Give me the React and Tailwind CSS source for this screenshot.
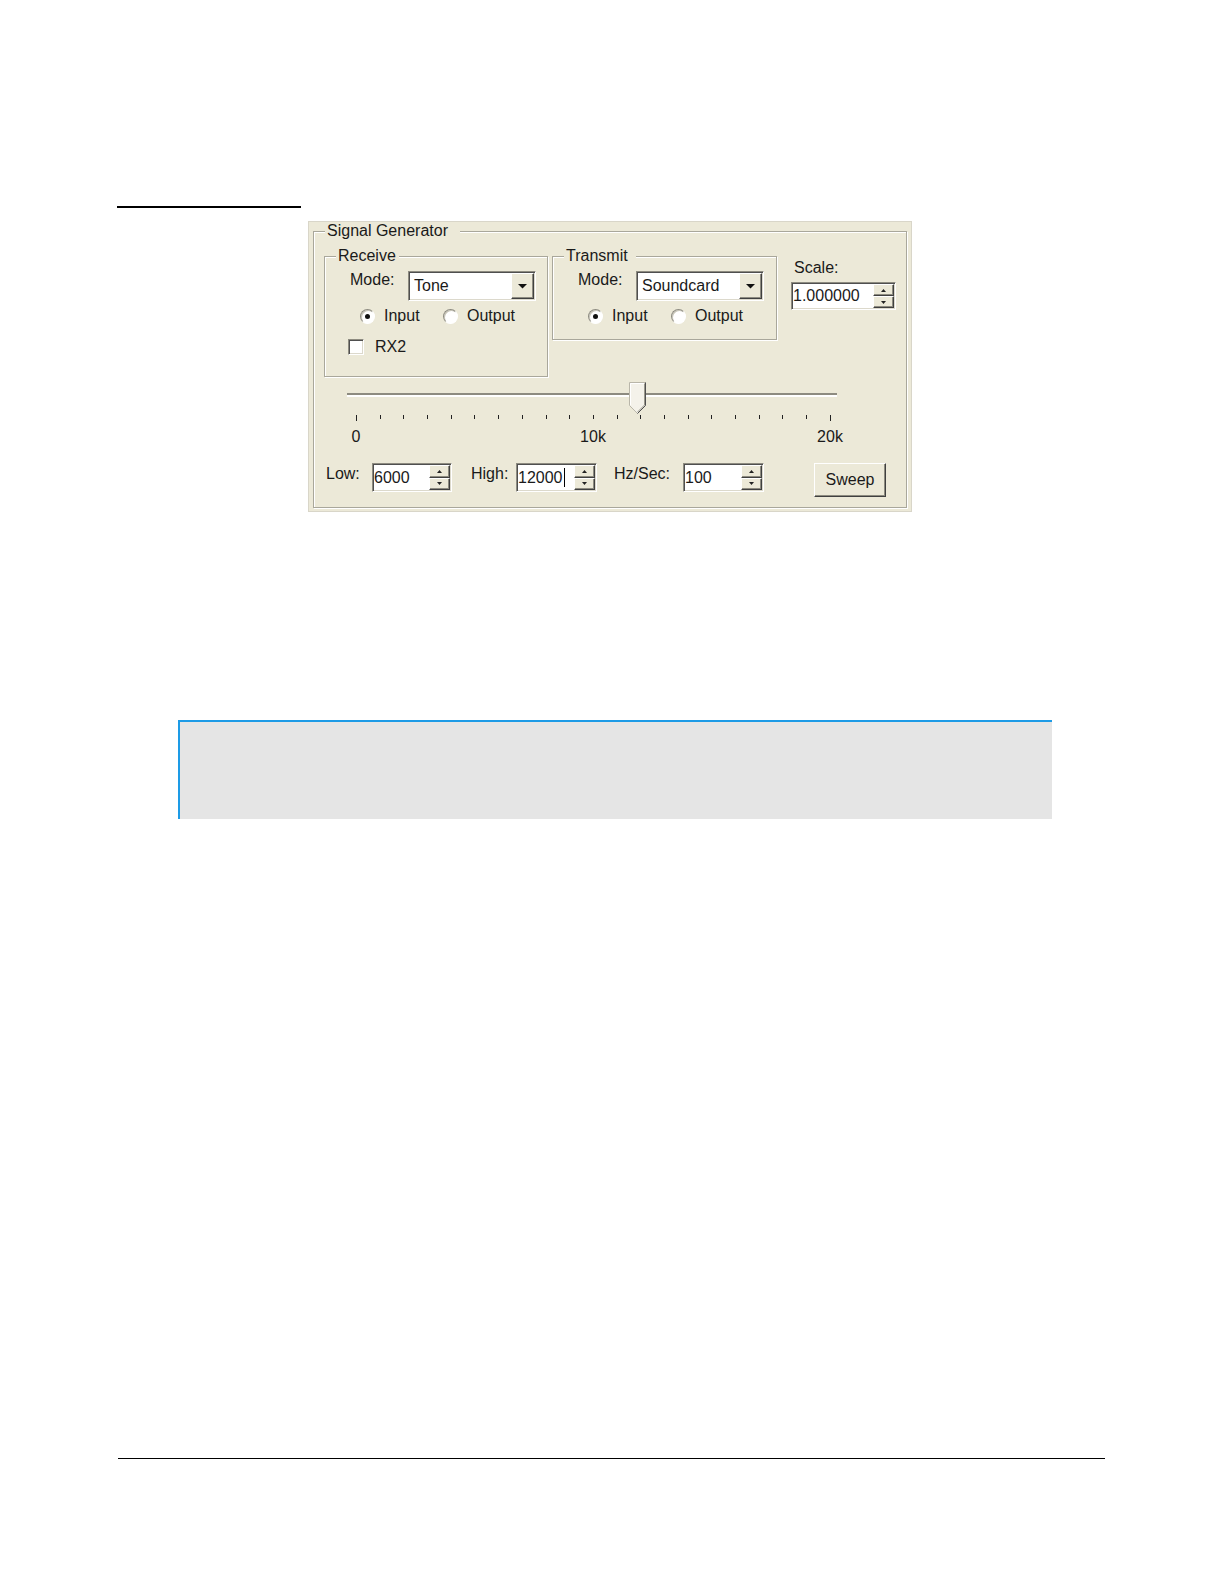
const sunken =
  'border border-t-[#8d8b80] border-l-[#8d8b80] border-b-white border-r-white shadow-[inset_1px_1px_0_#4f4f4f,inset_-1px_-1px_0_#dcd9cc]';
const raised =
  'border border-t-white border-l-white border-b-[#404040] border-r-[#404040] shadow-[inset_-1px_-1px_0_#8d8b80]';

function GroupBox({ title, className, legendPad = 'pr-[3px]', children }) {
  return (
    <div
      className={`relative border border-[#a9a79b] shadow-[inset_1px_1px_0_#fff,1px_1px_0_#fff] ${className}`}
    >
      <span className={`absolute left-[11px] top-[-10px] bg-[#ece9d8] pl-[2px] leading-[18px] ${legendPad}`}>
        {title}
      </span>
      {children}
    </div>
  );
}

function DownArrow() {
  return (
    <svg width="9" height="5" viewBox="0 0 9 5">
      <polygon points="0,0 9,0 4.5,4.5" fill="#111" />
    </svg>
  );
}

function ComboBox({ value }) {
  return (
    <div className={`flex w-[128px] h-[30px] bg-white p-[1px] ${sunken}`}>
      <span className="flex-1 pl-[4px] leading-[26px]">{value}</span>
      <span className={`flex w-[23px] items-center justify-center bg-[#ece9d8] ${raised}`}>
        <DownArrow />
      </span>
    </div>
  );
}

function SpinEdit({ value, width, height, caret }) {
  return (
    <div className={`flex bg-white p-[1px] ${sunken} ${width} ${height}`}>
      <span className="flex flex-1 items-center leading-[18px]">
        {value}
        {caret && <span className="ml-[1px] h-[19px] w-px bg-black" />}
      </span>
      <span className="flex w-[21px] flex-col">
        <span className={`flex flex-1 items-center justify-center bg-[#ece9d8] ${raised}`}>
          <svg width="5" height="3" viewBox="0 0 5 3">
            <polygon points="2.5,0 5,3 0,3" fill="#222" />
          </svg>
        </span>
        <span className={`flex flex-1 items-center justify-center bg-[#ece9d8] ${raised}`}>
          <svg width="5" height="3" viewBox="0 0 5 3">
            <polygon points="0,0 5,0 2.5,3" fill="#222" />
          </svg>
        </span>
      </span>
    </div>
  );
}

function Radio({ checked, label }) {
  return (
    <span className="flex items-center">
      <span className="flex h-[15px] w-[15px] items-center justify-center rounded-full border border-t-[#8d8b80] border-l-[#8d8b80] border-b-white border-r-white bg-white shadow-[inset_1px_1px_0_#c9c6b8]">
        {checked && <span className="h-[5px] w-[5px] rounded-full bg-[#111]" />}
      </span>
      <span className="ml-[9px] leading-[18px]">{label}</span>
    </span>
  );
}

function ModeRows({ mode }) {
  return (
    <>
      <div className="flex items-start mt-[14px] ml-[25px]">
        <span className="w-[58px] leading-[18px]">Mode:</span>
        <ComboBox value={mode} />
      </div>
      <div className="flex h-[18px] items-center mt-[6px] ml-[35px]">
        <span className="w-[83px]">
          <Radio checked label="Input" />
        </span>
        <Radio label="Output" />
      </div>
    </>
  );
}

function Thumb() {
  return (
    <svg width="17" height="32" viewBox="0 0 17 32" className="absolute left-[282px] top-0">
      <path d="M0.5 0.5 H16.5 V23.5 L8.5 31.5 L0.5 23.5 Z" fill="#f4f2ea" stroke="#b9b6a9" />
      <path d="M1.5 23 V1.5 H15.5" fill="none" stroke="#fff" />
      <path d="M16.5 0.5 V23.5 L8.5 31.5" fill="none" stroke="#505050" />
      <path d="M15.5 1.5 V23 L8.5 30" fill="none" stroke="#9a988c" />
    </svg>
  );
}

function SignalGenerator() {
  const ticks = Array.from({ length: 21 }, (_, i) => i);
  return (
    <div className="ml-[308px] mt-[13px] h-[291px] w-[604px] border border-[#d9d6c9] bg-[#ece9d8] pt-[9px] pl-[4px] pr-[4px] pb-[3px]">
      <GroupBox title="Signal Generator" className="h-full" legendPad="pr-[12px]">
        <div className="flex items-start mt-[24px] ml-[10px]">
          <GroupBox title="Receive" className="w-[224px] h-[121px]">
            <ModeRows mode="Tone" />
            <div className="flex h-[18px] items-center mt-[13px] ml-[23px]">
              <span className={`h-[16px] w-[16px] bg-white ${sunken}`} />
              <span className="ml-[11px] leading-[18px]">RX2</span>
            </div>
          </GroupBox>
          <GroupBox title="Transmit" className="ml-[4px] w-[225px] h-[84px]" legendPad="pr-[8px]">
            <ModeRows mode="Soundcard" />
          </GroupBox>
          <div className="ml-[14px] mt-[3px] flex flex-col">
            <span className="pl-[3px] leading-[18px]">Scale:</span>
            <div className="mt-[5px]">
              <SpinEdit value="1.000000" width="w-[105px]" height="h-[28px]" />
            </div>
          </div>
        </div>

        <div className="relative ml-[33px] mt-[5px] h-[31px] w-[490px] pt-[11px]">
          <div className="h-[4px] border-t-2 border-t-[#8d8b80] border-b-2 border-b-white" />
          <Thumb />
        </div>

        <div className="flex items-start justify-between ml-[42px] mt-[2px] h-[6px] w-[475px]">
          {ticks.map((i) => (
            <span key={i} className={`w-px bg-[#222] ${i === 0 || i === 20 ? 'h-[6px]' : 'h-[4px]'}`} />
          ))}
        </div>

        <div className="flex gap-[197px] ml-[22px] mt-[7px]">
          <span className="w-[40px] text-center leading-[18px]">0</span>
          <span className="w-[40px] text-center leading-[18px]">10k</span>
          <span className="w-[40px] text-center leading-[18px]">20k</span>
        </div>

        <div className="flex items-start ml-[12px] mt-[17px]">
          <span className="w-[46px] mt-[2px] leading-[18px]">Low:</span>
          <SpinEdit value="6000" width="w-[80px]" height="h-[29px]" />
          <span className="ml-[19px] w-[45px] mt-[2px] leading-[18px]">High:</span>
          <SpinEdit value="12000" width="w-[81px]" height="h-[29px]" caret />
          <span className="ml-[17px] w-[69px] mt-[2px] leading-[18px]">Hz/Sec:</span>
          <SpinEdit value="100" width="w-[81px]" height="h-[29px]" />
          <button
            type="button"
            className={`ml-[50px] flex h-[34px] w-[72px] items-center justify-center bg-[#ece9d8] leading-[18px] ${raised}`}
          >
            Sweep
          </button>
        </div>
      </GroupBox>
    </div>
  );
}

export default function App() {
  return (
    <div className="h-[1584px] w-[1224px] overflow-hidden bg-white pt-[206px] font-['Liberation_Sans',Arial,sans-serif] text-[16px] text-[#1a1a1a]">
      <div className="ml-[117px] h-[2px] w-[184px] bg-black" />

      <SignalGenerator />

      <div className="ml-[178px] mt-[208px] h-[99px] w-[874px] border-t-2 border-l-2 border-[#1d9be6] bg-[#e5e5e5]" />

      <div className="ml-[118px] mt-[639px] h-px w-[987px] bg-black" />
    </div>
  );
}
